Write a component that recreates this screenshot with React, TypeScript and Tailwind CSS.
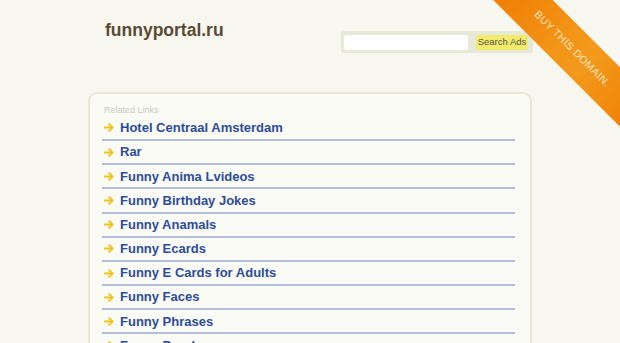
const links = [
  "Hotel Centraal Amsterdam",
  "Rar",
  "Funny Anima Lvideos",
  "Funny Birthday Jokes",
  "Funny Anamals",
  "Funny Ecards",
  "Funny E Cards for Adults",
  "Funny Faces",
  "Funny Phrases",
  "Funny Pranks",
];

function Arrow() {
  return (
    <svg width="10" height="9" viewBox="0 0 10 9" className="shrink-0">
      <path
        d="M0.5 4.5H8.5M5 1L8.7 4.5L5 8"
        fill="none"
        stroke="#f2c21c"
        strokeWidth="1.8"
        strokeLinecap="round"
        strokeLinejoin="round"
      />
    </svg>
  );
}

export default function App() {
  return (
    <div className="relative h-[343px] w-[620px] overflow-hidden bg-[#f7f7f0] font-['Liberation_Sans',Arial,sans-serif]">
      <header className="flex items-start pl-[105px] pr-[87px] pt-[19px]">
        <h1 className="text-[17.5px] font-bold leading-[22px] text-[#5b4a33]">
          funnyportal.ru
        </h1>
        <form className="ml-auto mt-[12px] flex h-[22px] w-[192px] items-center gap-[8px] rounded-[3px] bg-[#e7e9d8] px-[3px]">
          <div className="h-[15px] w-[124px] rounded-[3px] bg-white" />
          <button
            type="button"
            className="flex h-[15px] w-[52px] items-center justify-center rounded-[3px] bg-[#f4ea6c] text-[9.5px] leading-none text-[#56584a]"
          >
            Search Ads
          </button>
        </form>
      </header>

      <section className="ml-[88px] mt-[39px] w-[444px] rounded-[9px] border-2 border-[#e7e8d4] bg-[#fbfbf6] pb-4 pl-[12px] pr-[15px] pt-[11px]">
        <p className="pl-[2px] text-[9px] leading-[11px] text-[#c9c9c2]">
          Related Links
        </p>
        <ul className="mt-[0.8px]">
          {links.map((link) => (
            <li
              key={link}
              className="flex h-[24.2px] items-center gap-[6px] border-b-2 border-[#b1bedc] pl-[2px]"
            >
              <Arrow />
              <span className="text-[13px] font-bold text-[#2c4c9b]">
                {link}
              </span>
            </li>
          ))}
        </ul>
      </section>

      <div className="absolute left-[460px] top-[26px] flex h-[42px] w-[220px] rotate-45 items-center justify-center bg-[linear-gradient(90deg,#ef7800,#f39416_45%,#f39a1c_60%,#f07c00)]">
        <span className="pl-[6px] text-[10.5px] tracking-[0.4px] text-[#fde6c4]">
          BUY THIS DOMAIN.
        </span>
      </div>
    </div>
  );
}
